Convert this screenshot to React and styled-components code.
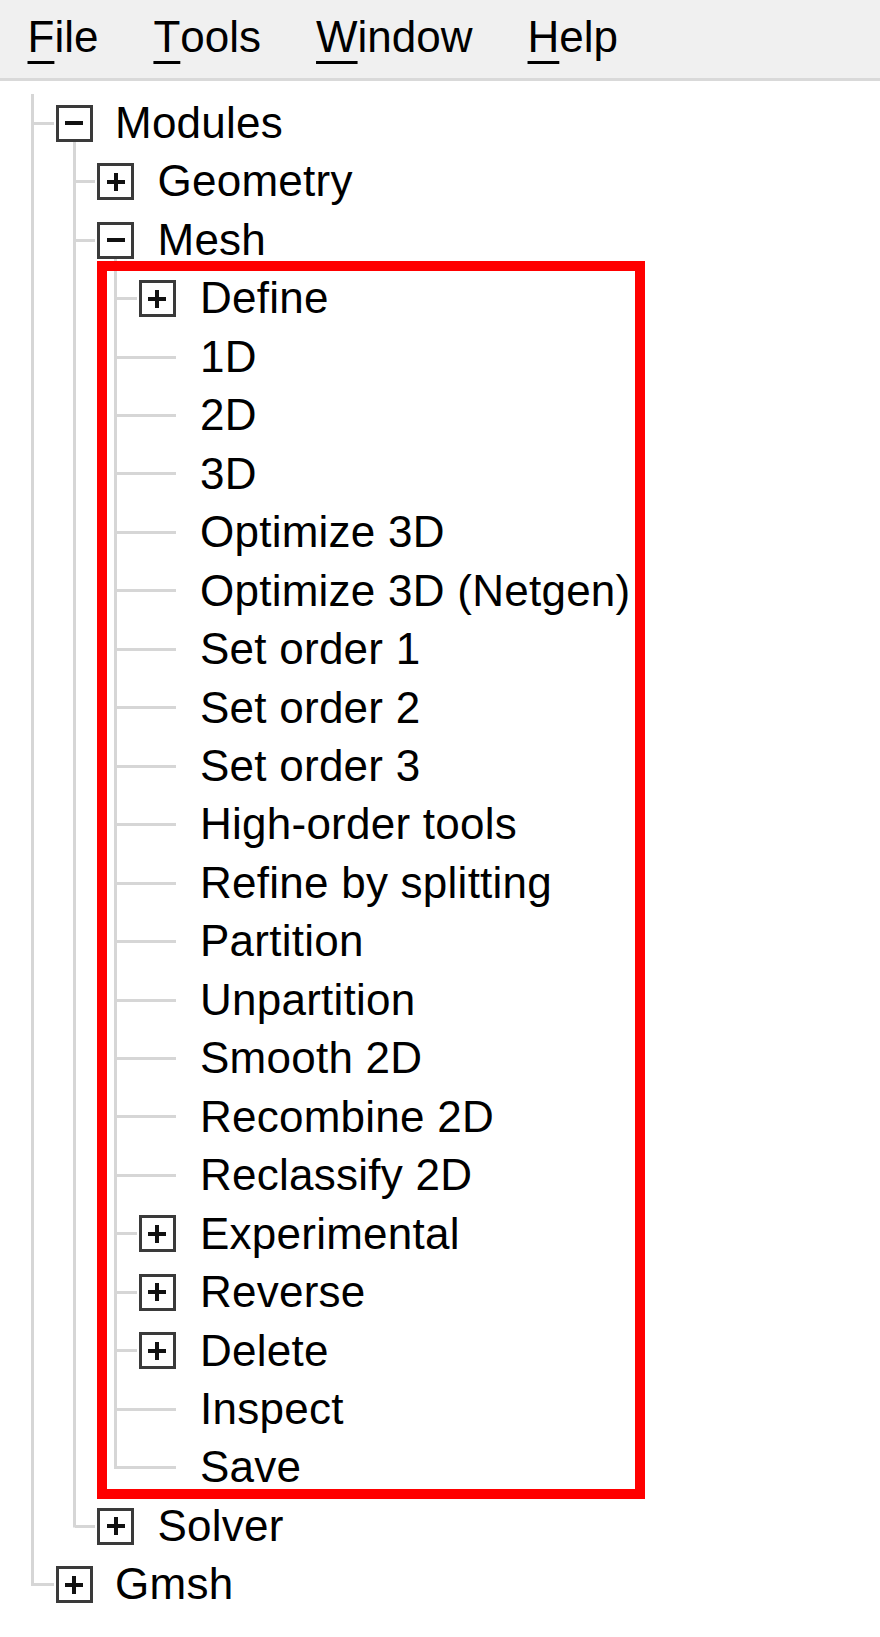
import React from 'react';
import styled, { createGlobalStyle, css } from 'styled-components';

const LINE = '#d6d6d6';
const ROW_H = '58.46px';

const GlobalStyle = createGlobalStyle`
  html, body {
    margin: 0;
    padding: 0;
    background: #ffffff;
  }
  body {
    font-family: "Liberation Sans", Arial, sans-serif;
    color: #000;
    font-kerning: none;
  }
`;

const Window = styled.div`
  width: 880px;
  min-height: 1637px;
  background: #ffffff;
`;

const MenuBar = styled.nav`
  display: flex;
  align-items: flex-start;
  height: 81px;
  padding-top: 7.5px;
  box-sizing: border-box;
  background: #f0f0f0;
  border-bottom: 3px solid #d9d9d9;
`;

const MenuItem = styled.div`
  padding: 0 27.5px;
  font-size: 44px;
  line-height: ${ROW_H};
  white-space: nowrap;
`;

const Mnemonic = styled.span`
  text-decoration: underline;
  text-decoration-thickness: 3px;
  text-underline-offset: 9px;
  text-decoration-skip-ink: none;
`;

const Tree = styled.div`
  padding: 13px 0 0 12px;
`;

const Row = styled.div`
  display: flex;
  align-items: stretch;
  height: ${ROW_H};
`;

const vLine = (h = '100%') => `linear-gradient(${LINE}, ${LINE}) 50% 0 / 3px ${h} no-repeat`;
const hLine = `linear-gradient(${LINE}, ${LINE}) 100% 50% / 50% 3px no-repeat`;

const Guide = styled.div`
  flex: 0 0 41.5px;
  ${({ $kind }) => $kind === 'pass' && css`background: ${vLine()};`}
  ${({ $kind }) => $kind === 'tee' && css`background: ${vLine()}, ${hLine};`}
  ${({ $kind }) => $kind === 'corner' && css`background: ${vLine('calc(50% + 1.5px)')}, ${hLine};`}
`;

const NodeCell = styled.div`
  flex: 0 0 41.5px;
  display: grid;
  place-items: center;
  ${({ $leaf }) => $leaf && css`
    background: linear-gradient(${LINE}, ${LINE}) 0 50% / calc(100% - 2px) 3px no-repeat;
  `}
  ${({ $open }) => $open && css`
    background: linear-gradient(${LINE}, ${LINE}) 50% 100% / 3px 50% no-repeat;
  `}
`;

const Expander = styled.span`
  width: 37px;
  height: 37px;
  box-sizing: border-box;
  border: 3px solid #3a3a3a;
  background: #fff;
  display: grid;
  place-items: center;

  &::before {
    content: '';
    grid-area: 1 / 1;
    width: 18px;
    height: 4px;
    background: #111;
  }

  &::after {
    content: '';
    grid-area: 1 / 1;
    width: 4px;
    height: 18px;
    background: ${({ $open }) => ($open ? 'transparent' : '#111')};
  }
`;

const Label = styled.span`
  margin-left: ${({ $depth }) => 20 + $depth}px;
  font-size: 44px;
  line-height: ${ROW_H};
  letter-spacing: 0.25px;
  white-space: nowrap;
`;

const Children = styled.div`
  ${({ $highlight }) => $highlight && css`
    position: relative;

    &::after {
      content: '';
      position: absolute;
      top: -8px;
      bottom: -2px;
      left: 85px;
      width: 548px;
      box-sizing: border-box;
      border: 10px solid #ff0000;
      pointer-events: none;
    }
  `}
`;

const leaf = (label) => ({ label });
const folder = (label, children = [], open = false, highlight = false) => ({ label, children, open, highlight });

const treeData = [
  folder('Modules', [
    folder('Geometry'),
    folder('Mesh', [
      folder('Define'),
      leaf('1D'),
      leaf('2D'),
      leaf('3D'),
      leaf('Optimize 3D'),
      leaf('Optimize 3D (Netgen)'),
      leaf('Set order 1'),
      leaf('Set order 2'),
      leaf('Set order 3'),
      leaf('High-order tools'),
      leaf('Refine by splitting'),
      leaf('Partition'),
      leaf('Unpartition'),
      leaf('Smooth 2D'),
      leaf('Recombine 2D'),
      leaf('Reclassify 2D'),
      folder('Experimental'),
      folder('Reverse'),
      folder('Delete'),
      leaf('Inspect'),
      leaf('Save'),
    ], true, true),
    folder('Solver'),
  ], true),
  folder('Gmsh'),
];

const TreeItem = ({ node, trail, last }) => {
  const isFolder = Boolean(node.children);
  return (
    <>
      <Row>
        {trail.map((pass, i) => (
          <Guide key={i} $kind={pass ? 'pass' : 'blank'} />
        ))}
        <Guide $kind={last ? 'corner' : 'tee'} />
        <NodeCell $leaf={!isFolder} $open={isFolder && node.open}>
          {isFolder && <Expander $open={node.open} />}
        </NodeCell>
        <Label $depth={trail.length}>{node.label}</Label>
      </Row>
      {isFolder && node.open && (
        <Children $highlight={node.highlight}>
          {node.children.map((child, i) => (
            <TreeItem
              key={child.label}
              node={child}
              trail={[...trail, !last]}
              last={i === node.children.length - 1}
            />
          ))}
        </Children>
      )}
    </>
  );
};

const menus = [
  ['F', 'ile'],
  ['T', 'ools'],
  ['W', 'indow'],
  ['H', 'elp'],
];

export default function App() {
  return (
    <Window>
      <GlobalStyle />
      <MenuBar>
        {menus.map(([key, rest]) => (
          <MenuItem key={key}>
            <Mnemonic>{key}</Mnemonic>
            {rest}
          </MenuItem>
        ))}
      </MenuBar>
      <Tree>
        {treeData.map((node, i) => (
          <TreeItem key={node.label} node={node} trail={[]} last={i === treeData.length - 1} />
        ))}
      </Tree>
    </Window>
  );
}
